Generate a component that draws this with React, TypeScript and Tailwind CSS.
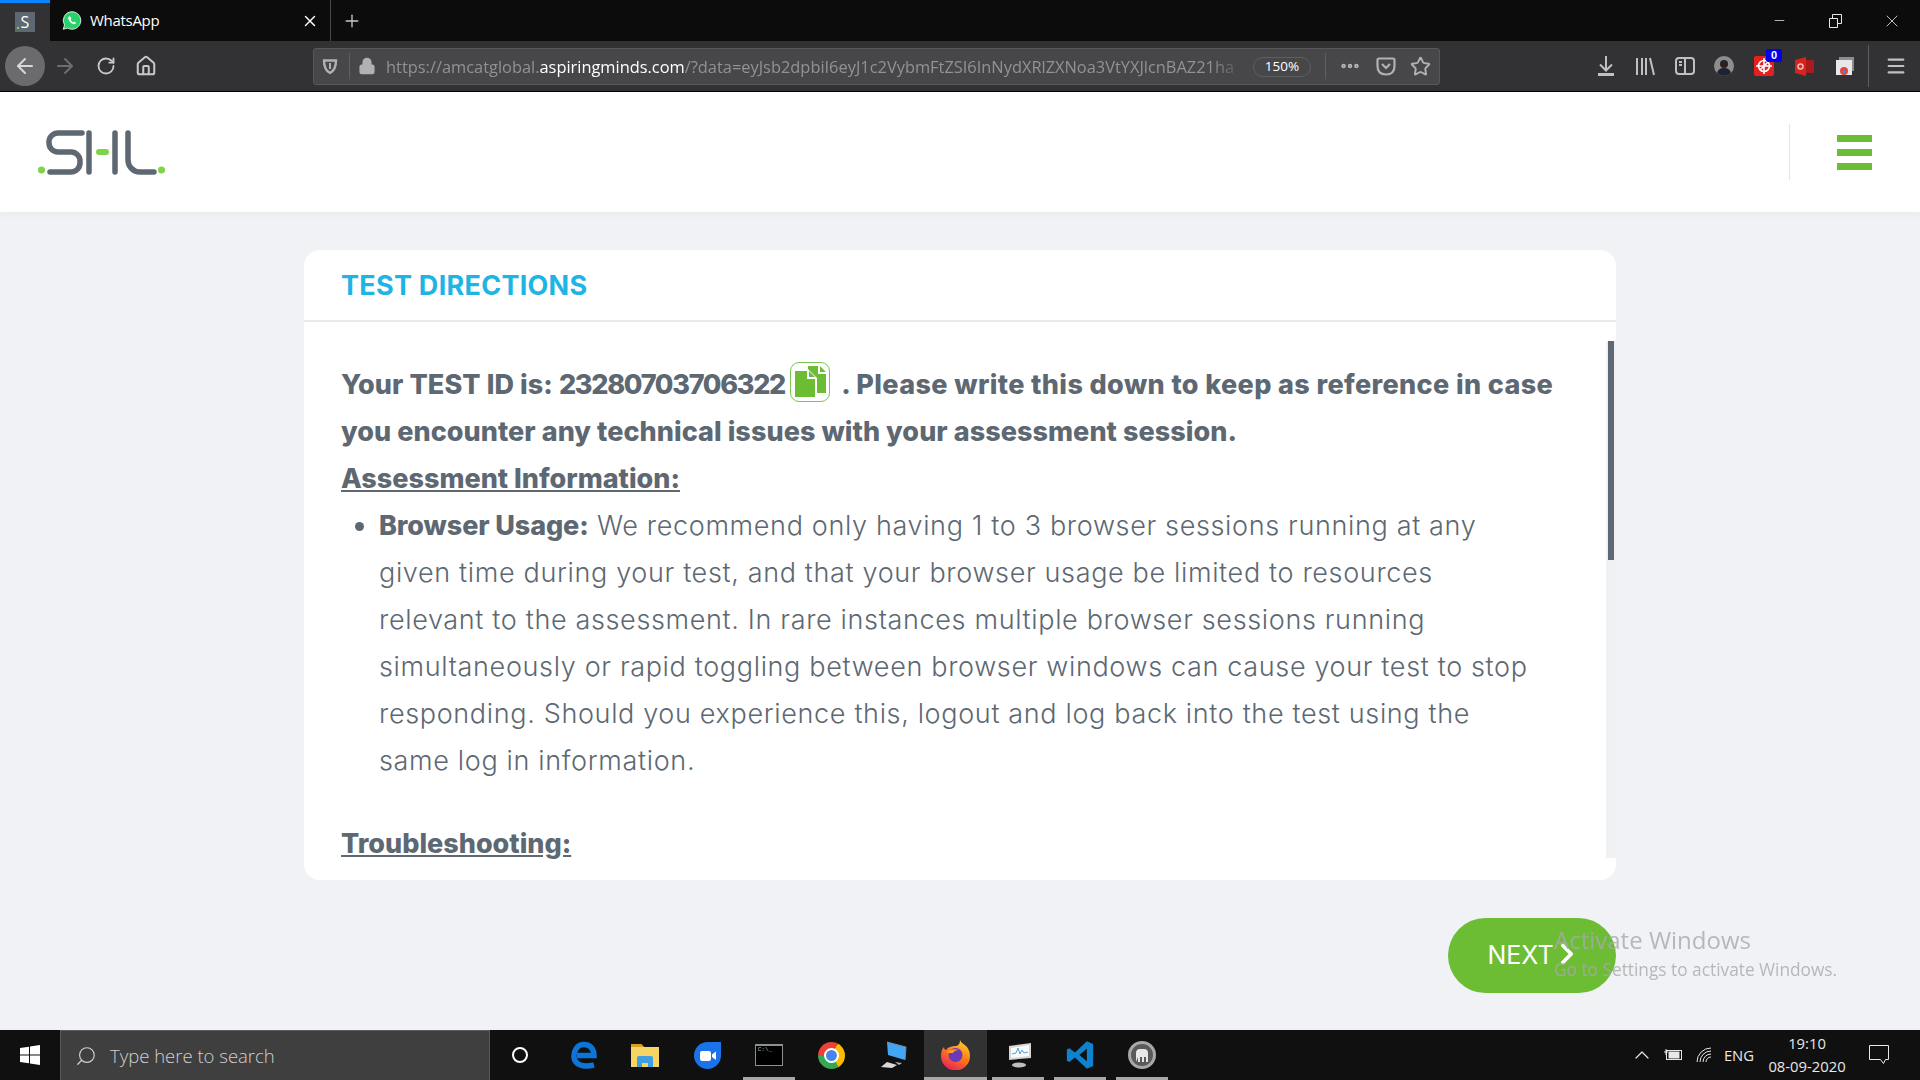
import { ArrowLeft, ArrowRight, RotateCw, Home, Lock, MoreHorizontal, Star, X, Plus, Minus, Search, ChevronUp, ChevronRight, Menu } from "lucide-react";

const lines = [
  "given time during your test, and that your browser usage be limited to resources",
  "relevant to the assessment. In rare instances multiple browser sessions running",
  "simultaneously or rapid toggling between browser windows can cause your test to stop",
  "responding. Should you experience this, logout and log back into the test using the",
  "same log in information.",
];

function ShlLogo() {
  return (
    <svg width="128" height="45" viewBox="0 0 128 45" fill="none">
      <circle cx="3.500" cy="40" r="3.500" fill="#7ed348" />
      <path d="M44 3H20A9 9 0 0 0 11 12V13A9 9 0 0 0 20 22H33A9 9 0 0 1 42 31V33A9 9 0 0 1 33 42H12" stroke="#5d6872" strokeWidth="5.500" strokeLinecap="round" />
      <path d="M51 3V42M77 3V42M90 3V30A12 12 0 0 0 102 42H116" stroke="#5d6872" strokeWidth="5.500" strokeLinecap="round" />
      <path d="M61 22H68" stroke="#7ed348" strokeWidth="6" strokeLinecap="round" />
      <circle cx="123.500" cy="40" r="3.500" fill="#7ed348" />
    </svg>
  );
}

function TabBar() {
  return (
    <div className="flex h-[41px] items-stretch bg-[#0c0c0c] font-['Open_Sans',sans-serif] text-white">
      <div className="flex w-[50px] items-center justify-center border-t-[3px] border-[#0a84ff] bg-[#323234]">
        <div className="relative flex h-5 w-5 items-center justify-center bg-[#5d6872] text-[16px] leading-none">
          S
          <div className="absolute bottom-[3px] left-[2px] h-[2px] w-[2px] bg-[#7ed348]" />
        </div>
      </div>
      <div className="flex w-[281px] items-center border-r border-[#48484a] pl-[12px] pr-[11px]">
        <svg width="20" height="21" viewBox="0 0 24 24">
          <path d="M12 1.500A10.500 10.500 0 0 0 3 17.400L1.500 22.500l5.300-1.400A10.500 10.500 0 1 0 12 1.500z" fill="#25d366" stroke="#fff" strokeWidth="1" />
          <path d="M8.500 6.800c-1.300 1-1.400 2.800-.3 4.800 1.200 2.200 3.300 4 5.300 4.600 1.600.5 3-.2 3.500-1.500l-2.400-1.500-1.100 1c-1.300-.5-2.700-1.900-3.200-3.200l1-1.100-1.400-2.600z" fill="#fff" />
        </svg>
        <span className="ml-[8px] flex-1 text-[15px] tracking-[-0.02em]">WhatsApp</span>
        <X size={18} strokeWidth={2} />
      </div>
      <div className="flex w-[42px] items-center justify-center">
        <Plus size={20} strokeWidth={1.600} className="text-[#c8c8c8]" />
      </div>
      <div className="ml-auto flex items-center text-[#e8e8e8]">
        <div className="flex w-[56px] justify-center"><Minus size={15} strokeWidth={1.200} /></div>
        <div className="flex w-[56px] justify-center">
          <svg width="13" height="14" viewBox="0 0 13 14" fill="none" stroke="currentColor"><path d="M.5 4.500h8v9h-8zM3.500 4.500v-4h9v9h-4" /></svg>
        </div>
        <div className="flex w-[57px] justify-center"><X size={20} strokeWidth={1} /></div>
      </div>
    </div>
  );
}

function UrlBar() {
  return (
    <div className="flex h-[37px] w-[1127px] items-center rounded-[3px] border border-[#58585a] bg-[#474749] font-['Open_Sans',sans-serif] text-[#b1b1b3]">
      <div className="flex w-[35px] justify-center pr-[3px]">
        <svg width="16" height="17" viewBox="0 0 16 17" fill="none" stroke="currentColor" strokeWidth="2.400"><path d="M2 2.500c4 0 8 0 12 0 0 6-1 10-6 12.500C3 12.500 2 8.500 2 2.500z" /><path d="M8 5v6" strokeWidth="2" /></svg>
      </div>
      <div className="h-[26px] w-px bg-[#5e5e60]" />
      <div className="flex w-[34px] justify-center"><Lock size={18} fill="currentColor" strokeWidth={2.200} /></div>
      <div className="mt-[3px] flex min-w-0 flex-1 overflow-hidden whitespace-nowrap pl-[2px] text-[16.400px] text-[#929294] [mask-image:linear-gradient(to_right,black_96%,transparent)]">
        <span>https://amcatglobal.</span>
        <span className="text-white">aspiringminds.com</span>
        <span>/?data=eyJsb2dpbiI6eyJ1c2VybmFtZSI6InNydXRlZXNoa3VtYXJlcnBAZ21ha</span>
      </div>
      <div className="ml-2 mt-px flex h-5 w-[58px] shrink-0 items-center justify-center rounded-full border border-[#5e5e60] text-[13.500px] text-white">150%</div>
      <div className="ml-[14px] h-[26px] w-px bg-[#5e5e60]" />
      <div className="flex w-[48px] justify-center"><MoreHorizontal size={22} strokeWidth={3} /></div>
      <svg className="ml-[2px]" width="20" height="19" viewBox="0 0 20 19" fill="none" stroke="currentColor" strokeWidth="2.200"><path d="M1.500 3q0-1.500 1.500-1.500h14q1.500 0 1.500 1.500v6q0 8.500-8.500 8.500T1.500 9z" /><path d="M6 7l4 4 4-4" /></svg>
      <Star size={21} strokeWidth={2.200} className="ml-[14px] mr-2" />
    </div>
  );
}

function Toolbar() {
  return (
    <div className="flex h-[51px] items-center border-b border-black bg-[#323234] text-[#b1b1b3]">
      <div className="ml-[5px] flex h-[40px] w-[40px] items-center justify-center rounded-full bg-[#6b6b6d]"><ArrowLeft size={24} className="text-[#d8d8d8]" /></div>
      <ArrowRight size={24} className="ml-[8px] text-[#6d6d6f]" />
      <RotateCw size={20} strokeWidth={2.200} className="ml-[19px] text-[#c8c8c8]" />
      <Home size={22} strokeWidth={2.200} className="ml-[19px] text-[#c8c8c8]" />
      <div className="ml-[156px]"><UrlBar /></div>
      <div className="ml-[158px] flex items-center">
        <svg width="16" height="20" viewBox="0 0 16 20" fill="none" stroke="#c0c0c2" strokeWidth="2"><path d="M8 0v14M2 8.500l6 6 6-6" /><path d="M0 18.500h16" strokeWidth="3" /></svg>
        <svg className="ml-[21px]" width="20" height="19" viewBox="0 0 20 19" fill="none" stroke="#c0c0c2" strokeWidth="2"><path d="M2 1v17M7 1v17M11 1v17M15 1l4 17" /></svg>
        <svg className="ml-[20px]" width="20" height="18" viewBox="0 0 20 18" fill="none" stroke="#c0c0c2" strokeWidth="2"><rect x="1" y="1" width="18" height="16" rx="3" /><path d="M10 1v16M4 5h3M4 8h3" /></svg>
        <div className="relative ml-[19px] h-5 w-5 overflow-hidden rounded-full bg-[#8d8d8f]">
          <div className="mx-auto mt-1 h-2 w-2 rounded-full bg-[#2b211f]" />
          <div className="mx-auto h-2 w-[14px] rounded-t-md bg-[#1e2233]" />
        </div>
        <div className="relative ml-5 h-5 w-5 rounded-[2px] bg-[#e5201f]">
          <svg width="20" height="20" viewBox="0 0 20 20" fill="none" stroke="#fff" strokeWidth="1.600"><circle cx="10" cy="10" r="5.500" /><path d="M10 2v16M2 10h16M6 14l8-8" /></svg>
          <div className="absolute -right-2 -top-[7px] flex h-[13px] w-4 items-center justify-center rounded-[2px] bg-[#0000ee] font-['Liberation_Sans',sans-serif] text-[11px] font-bold text-white">0</div>
        </div>
        <svg className="ml-[21px]" width="19" height="19" viewBox="0 0 19 19"><path d="M0 3l11-3v19L0 16z" fill="#d82420" /><path d="M11 3h8v13h-8z" fill="#a81c1c" /><circle cx="5.500" cy="9.500" r="2.500" fill="none" stroke="#f8b8b0" strokeWidth="1.500" /></svg>
        <svg className="ml-[22px]" width="18" height="18" viewBox="0 0 18 18"><rect x="3" y="0" width="15" height="14" fill="#8d8d8f" /><rect x="0" y="3" width="16" height="15" fill="#e8e8e8" /><circle cx="8" cy="14" r="4" fill="#ea4335" /><circle cx="8" cy="14.500" r="1.600" fill="#4285f4" /></svg>
      </div>
      <div className="ml-[14px] h-[42px] w-px bg-[#5e5e60]" />
      <Menu size={22} strokeWidth={2.400} className="ml-[16px] text-[#c0c0c2]" />
    </div>
  );
}

function CopyIcon() {
  return (
    <span className="mx-[5px] inline-flex h-10 w-10 items-center justify-center rounded-[9px] border border-[#7ac74f] align-[-3px]">
      <svg width="31" height="31" viewBox="0 0 31 31" fill="#6cbd33">
        <path d="M0 5h12v8h8v18H0zM14 5l6 6h-6z" />
        <path d="M13 0h10v8h8v19H22V12l-9-9zM25 0l6 6h-6z" />
      </svg>
    </span>
  );
}

function Directions() {
  return (
    <div className="relative mx-[304px] mt-[38px] h-[630px] rounded-[16px] bg-white font-['Inter',sans-serif] text-[#5d6872]">
      <div className="flex h-[72px] items-center border-b-2 border-[#e8e9ec] pl-[37px] text-[27px] font-bold leading-none tracking-[0.01em] text-[#1eb4e3]">TEST DIRECTIONS</div>
      <div className="h-[558px] overflow-hidden pl-[37px] pt-[39px] text-[27px] leading-[47px]">
        <p className="h-[47px] whitespace-nowrap font-extrabold">
          <span className="tracking-[0.003em]">Your TEST ID is: </span>
          <span className="tracking-[-0.048em]">23280703706322</span>
          <CopyIcon />
          <span className="tracking-[0.014em]"> . Please write this down to keep as reference in case</span>
        </p>
        <p className="font-extrabold tracking-[0.002em]">you encounter any technical issues with your assessment session.</p>
        <p className="font-extrabold underline">Assessment Information:</p>
        <ul className="list-disc pl-[38px] font-light tracking-[0.024em]">
          <li className="whitespace-nowrap"><b className="font-extrabold tracking-[-0.004em]">Browser Usage:</b> We recommend only having 1 to 3 browser sessions running at any</li>
          {lines.map((line) => (
            <li key={line} className="list-none whitespace-nowrap">{line}</li>
          ))}
        </ul>
        <p className="mt-[36px] font-extrabold underline">Troubleshooting:</p>
      </div>
      <div className="absolute bottom-[22px] right-0 h-[517px] w-[10px] bg-[#eff0f2]">
        <div className="ml-[2px] h-[219px] w-[6px] bg-[#5d6872]" />
      </div>
    </div>
  );
}

function TaskIcon({ active, open, children }: { active?: boolean; open?: boolean; children: React.ReactNode }) {
  return (
    <div className={`relative flex h-[50px] w-[62.200px] items-center justify-center ${active ? "bg-[#323232]" : ""}`}>
      {children}
      {open && <div className={`absolute bottom-0 h-[3px] bg-[#a8a8a8] ${active ? "left-0 right-0" : "left-[5px] right-[5px]"}`} />}
    </div>
  );
}

function Taskbar() {
  return (
    <div className="flex h-[50px] items-center bg-[#101010] font-['Open_Sans',sans-serif] text-white">
      <div className="flex h-full w-[60px] items-center justify-center">
        <svg width="20" height="20" viewBox="0 0 20 20" fill="#fff"><path d="M0 3l9-1.300V9.500H0zM10 1.500L20 0v9.500H10zM0 10.500h9v7.800L0 17zM10 10.500h10V20l-10-1.500z" /></svg>
      </div>
      <div className="flex h-full w-[430px] items-center border-x border-t border-[#5a5a5a] bg-[#3f3f3f] pl-[14px] text-[#d0d0d0]">
        <Search size={22} strokeWidth={1.300} className="-scale-x-100" />
        <span className="ml-[13px] text-[18.500px] font-light">Type here to search</span>
      </div>
      <div className="-ml-px flex items-center">
        <TaskIcon><div className="h-[16px] w-[16px] rounded-full border-[2.500px] border-white" /></TaskIcon>
        <TaskIcon>
          <svg className="ml-[3px]" width="26" height="28" viewBox="0 0 26 28" fill="none" stroke="#0b76d8" strokeWidth="5.500"><path d="M6 14.500H23C23 7 18 3 12 3.500 6 4 2.500 10 3 16c.5 7 8 11 20 8" /></svg>
        </TaskIcon>
        <TaskIcon>
          <svg className="ml-[2px]" width="28" height="24" viewBox="0 0 28 24"><path d="M0 2q0-1 1-1h9l3 3h15v20H0z" fill="#f6d565" /><path d="M0 2q0-1 1-1h9l3 3H0z" fill="#d9a020" /><path d="M6 15q0-2 2-2h12q2 0 2 2v9h-5v-4h-6v4H6z" fill="#3f9fe0" /><path d="M11 20h6v4h-6z" fill="#f6d565" /></svg>
        </TaskIcon>
        <TaskIcon>
          <svg className="ml-[2px]" width="27" height="27" viewBox="0 0 27 27"><path d="M13.500 0H27V13.500A13.500 13.500 0 1 1 13.500 0z" fill="#1a73e8" /><path d="M6 11q0-2 2-2h7q2 0 2 2v6q0 2-2 2H8q-2 0-2-2zM18 12.500l4-3v8.500l-4-3z" fill="#fff" /></svg>
        </TaskIcon>
        <TaskIcon open>
          <div className="h-[22px] w-[28px] border border-t-2 border-[#8f8f8f] bg-black pl-[2px] font-['Liberation_Mono',monospace] text-[6px] leading-[8px] text-[#bbb]">C:\_</div>
        </TaskIcon>
        <TaskIcon>
          <div className="h-[27px] w-[27px] rounded-full bg-[conic-gradient(from_270deg,#ea4335_0_33%,#fbbc05_33%_66%,#34a853_66%_100%)] p-[8px]"><div className="h-full w-full rounded-full bg-[#4285f4] outline-2 outline-white" /></div>
        </TaskIcon>
        <TaskIcon>
          <svg width="28" height="28" viewBox="0 0 28 28"><path d="M8 1l19 5-1 13-17-5z" fill="#42a5f5" /><path d="M8 1l19 5-1 13" fill="none" stroke="#7a8794" /><path d="M2 26l6-5 10 3-5 3z" fill="#d8d8d8" /><path d="M16 21l7 1-3 2z" fill="#b5b5b5" /></svg>
        </TaskIcon>
        <TaskIcon active open>
          <svg width="29" height="30" viewBox="0 0 29 30">
            <defs>
              <linearGradient id="fox" x1="0.800" y1="0" x2="0.300" y2="1">
                <stop offset="0" stopColor="#ffd02e" />
                <stop offset="0.500" stopColor="#ff7a18" />
                <stop offset="1" stopColor="#e5215f" />
              </linearGradient>
            </defs>
            <path d="M19 0c1 3 4 4 7 7 3 4 3 8 3 9a14 14 0 0 1-29 0c0-4 1-7 3-9 0 2 1 3 2 3 2-3 6-4 9-4 3 0 5-2 5-6z" fill="url(#fox)" />
            <circle cx="14.500" cy="15" r="7" fill="#6a3ab8" />
            <path d="M6 13c2-3 7-5 12-3-3 0-5 1-6 3z" fill="#ff9a2e" />
          </svg>
        </TaskIcon>
        <TaskIcon open>
          <svg width="28" height="26" viewBox="0 0 28 26"><path d="M5 4l22-3v15L5 18z" fill="#d5d5d5" /><path d="M7 6l18-3v11L7 16z" fill="#fafafa" /><path d="M8 12l4-1 2-5 2 6 2-4 2 3 4-1" fill="none" stroke="#4aa3df" /><ellipse cx="15" cy="23" rx="7" ry="2.500" fill="#bdbdbd" /></svg>
        </TaskIcon>
        <TaskIcon open>
          <svg width="30" height="30" viewBox="0 0 24 24"><path d="M17.500 1L8 10 3.500 6.500 1.500 7.500v9l2 1L8 14l9.500 9 5-2.200V3.200z" fill="#0e82cc" /><path d="M17.500 7l-6 5 6 5z" fill="#101010" /></svg>
        </TaskIcon>
        <TaskIcon open>
          <div className="flex h-[28px] w-[28px] items-center justify-center rounded-full border-[3px] border-[#a8a8a8] bg-[#5a5a5a]">
            <svg width="16" height="13" viewBox="0 0 16 13" fill="#e8e8e8"><path d="M2 13V4q0-4 4-4h4q4 0 4 4v9h-2V8h-2v5H8V8H6v5H4V8z" /></svg>
          </div>
        </TaskIcon>
      </div>
      <div className="ml-auto flex h-full items-center text-[#e8e8e8]">
        <ChevronUp size={24} strokeWidth={1.200} />
        <svg className="ml-[9px]" width="20" height="14" viewBox="0 0 20 14" fill="none" stroke="currentColor"><path d="M3 1v3M1 4h4M3 4v3" /><rect x="3.500" y="2.500" width="15" height="9" /><rect x="6" y="4" width="10" height="6" fill="currentColor" /></svg>
        <svg className="ml-[13px]" width="16" height="16" viewBox="0 0 16 16" fill="none" stroke="currentColor"><path d="M1 15a14 14 0 0 1 14-14M4 15A11 11 0 0 1 15 4M7 15a8 8 0 0 1 8-8M10 15a5 5 0 0 1 5-5" /></svg>
        <span className="ml-[12px] text-[14.800px]">ENG</span>
        <div className="ml-[14px] flex w-[78px] flex-col items-center text-[14.800px] leading-[23px]">
          <span>19:10</span>
          <span>08-09-2020</span>
        </div>
        <svg className="ml-[23px] mr-[31px]" width="20" height="20" viewBox="0 0 20 20" fill="none" stroke="currentColor"><path d="M.5.500h19v14h-3l-2 4-3-4H.5z" /></svg>
      </div>
    </div>
  );
}

export default function App() {
  return (
    <div className="flex h-[1080px] w-[1920px] flex-col overflow-hidden bg-[#f0f2f5]">
      <TabBar />
      <Toolbar />
      <header className="flex h-[120px] shrink-0 items-center justify-between bg-white pl-[38px] pr-[48px] shadow-[0_1px_8px_rgba(0,0,0,0.05)]">
        <ShlLogo />
        <div className="flex h-[56px] items-center border-l border-[#e5e5e5] pl-[47px]">
          <div className="flex w-[35px] flex-col gap-[7px]">
            <div className="h-[7px] bg-[#6cbd33]" />
            <div className="h-[7px] bg-[#6cbd33]" />
            <div className="h-[7px] bg-[#6cbd33]" />
          </div>
        </div>
      </header>
      <Directions />
      <div className="relative flex flex-1 items-start justify-end pr-[304px] pt-[38px]">
        <button className="flex h-[75px] w-[168px] items-center justify-center rounded-full bg-[#6cbd33] pl-[3px] font-['Inter',sans-serif] text-[25px] text-white">
          NEXT
          <ChevronRight size={34} strokeWidth={2.600} className="-mx-[4px] -mt-1" />
        </button>
        <div className="absolute left-[1554px] top-[44px] font-['Open_Sans',sans-serif] text-[#a9a9ab] opacity-80">
          <div className="text-[24px] leading-[32px]">Activate Windows</div>
          <div className="mt-px text-[17.300px] leading-[26px]">Go to Settings to activate Windows.</div>
        </div>
      </div>
      <Taskbar />
    </div>
  );
}
